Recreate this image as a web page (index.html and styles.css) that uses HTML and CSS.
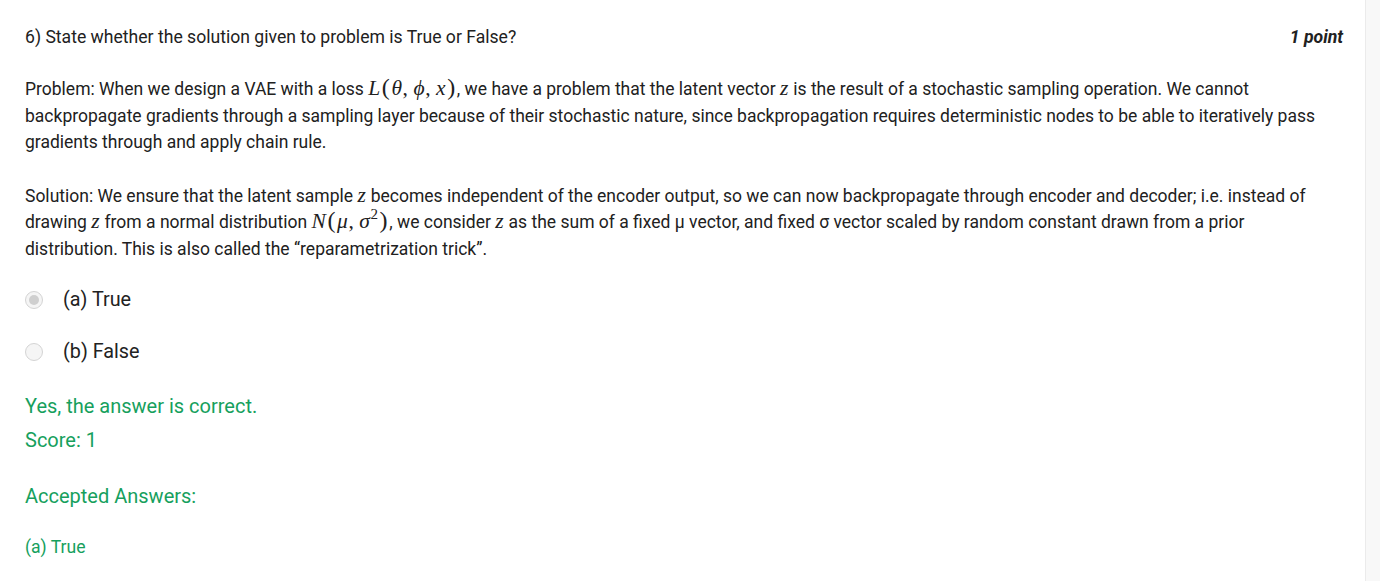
FILE: index.html
```html
<!DOCTYPE html>
<html>
<head>
<meta charset="utf-8">
<link rel="stylesheet" href="styles.css">
</head>
<body>
<div class="page">
  <main class="question">
    <div class="q-head">
      <div class="q-title">6) State whether the solution given to problem is True or False?</div>
      <div class="q-points">1 point</div>
    </div>
    <p class="q-text">Problem: When we design a VAE with a loss <span class="math"><i>L</i><span class="paren">(</span><i>θ</i>,&thinsp;<i>ϕ</i>,&thinsp;<i>x</i><span class="paren">)</span></span>, we have a problem that the latent vector <span class="math"><i>z</i></span> is the result of a stochastic sampling operation. We cannot backpropagate gradients through a sampling layer because of their stochastic nature, since backpropagation requires deterministic nodes to be able to iteratively pass gradients through and apply chain rule.</p>
    <p class="q-text">Solution: We ensure that the latent sample <span class="math"><i>z</i></span> becomes independent of the encoder output, so we can now backpropagate through encoder and decoder; i.e. instead of drawing <span class="math"><i>z</i></span> from a normal distribution <span class="math"><i>N</i><span class="paren">(</span><i>μ</i>,&thinsp;<i>σ</i><sup>2</sup><span class="paren">)</span></span>, we consider <span class="math"><i>z</i></span> as the sum of a fixed μ vector, and fixed σ vector scaled by random constant drawn from a prior distribution. This is also called the “reparametrization trick”.</p>
    <div class="options">
      <div class="option"><span class="radio checked"></span><span class="opt-label">(a) True</span></div>
      <div class="option"><span class="radio"></span><span class="opt-label">(b) False</span></div>
    </div>
    <div class="feedback">
      <div class="fb-line">Yes, the answer is correct.</div>
      <div class="fb-line">Score: 1</div>
      <div class="fb-line accepted">Accepted Answers:</div>
      <div class="fb-answer">(a) True</div>
    </div>
  </main>
  <div class="scroll-gutter"></div>
</div>
</body>
</html>
```

FILE: styles.css
```css
html, body {
  margin: 0;
  padding: 0;
  height: 100%;
  overflow: hidden;
  background: #ffffff;
}
body {
  font-family: Roboto, "Liberation Sans", sans-serif;
  color: #212121;
}
.page {
  display: flex;
  height: 581px;
}
.question {
  flex: 1;
  padding: 24px 22px 0 25px;
  min-width: 0;
}
.scroll-gutter {
  width: 14px;
  flex: none;
  background: #f8f8f8;
  border-left: 1px solid #ebebeb;
}
.q-head {
  display: flex;
  justify-content: space-between;
  align-items: center;
  font-size: 17.6px;
  line-height: 26px;
}
.q-points {
  font-weight: bold;
  font-style: italic;
}
.q-text {
  margin: 26px 12px 0 0;
  font-size: 17.5px;
  line-height: 26.6px;
}
.q-text + .q-text {
  margin-top: 27px;
}
.math {
  font-family: "Liberation Serif", "DejaVu Serif", serif;
  font-size: 21.5px;
  line-height: 0;
  letter-spacing: 0.6px;
}
.math i {
  font-style: italic;
}
.math .paren {
  font-size: 24px;
  line-height: 0;
  padding: 0 1px;
}
.math sup {
  font-size: 15px;
  line-height: 0;
  vertical-align: 9px;
}
.options {
  margin-top: 11px;
  display: flex;
  flex-direction: column;
}
.option {
  height: 52px;
  display: flex;
  align-items: center;
  gap: 20px;
}
.radio {
  width: 16px;
  height: 16px;
  border-radius: 50%;
  border: 1px solid #d4d4d4;
  background: #f5f5f5;
  display: flex;
  align-items: center;
  justify-content: center;
  box-sizing: content-box;
}
.radio.checked::after {
  content: "";
  width: 10px;
  height: 10px;
  border-radius: 50%;
  background: #cfcfcf;
}
.opt-label {
  font-size: 19.8px;
  color: #222;
}
.feedback {
  color: #16a05d;
}
.fb-line {
  font-size: 20px;
  line-height: 34px;
}
.fb-line:first-child {
  margin-top: 11px;
}
.fb-line.accepted {
  margin-top: 22px;
}
.fb-answer {
  margin-top: 21px;
  font-size: 17.6px;
  line-height: 26.5px;
}
```
